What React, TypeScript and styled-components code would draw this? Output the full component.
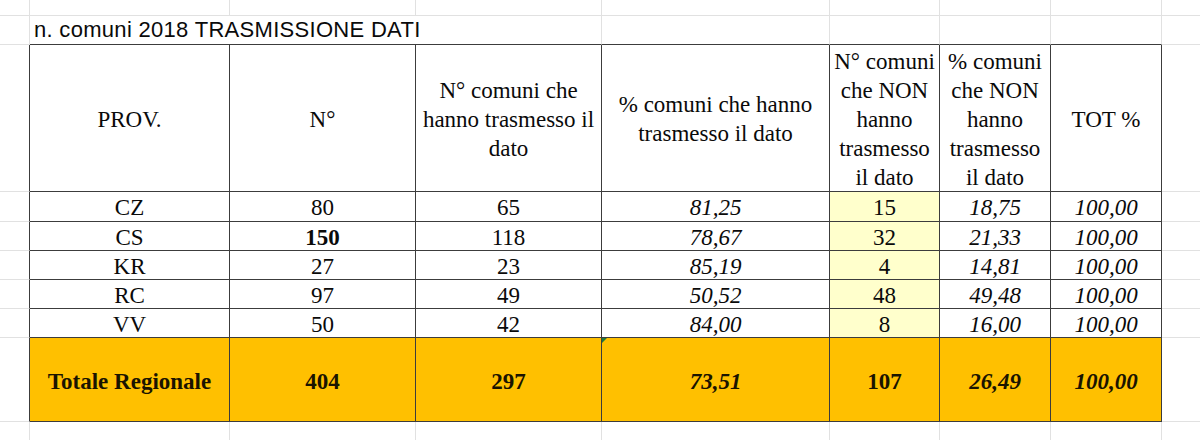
import styled, { createGlobalStyle } from "styled-components";
import { Fragment } from "react";

const GlobalStyle = createGlobalStyle`
	html, body {
		margin: 0;
		padding: 0;
		background: #ffffff;
	}
	* {
		box-sizing: border-box;
	}
`;

type Line = "light" | "dark" | "none";

const lineColor = (l: Line) =>
	l === "dark" ? "1px solid #3c3c3c" : l === "light" ? "1px solid #e1e1e1" : "none";

type Row = {
	prov: string;
	n: string;
	bold?: boolean;
	sent: string;
	pct: string;
	notSent: string;
	pctNot: string;
	tot: string;
};

const rows: Row[] = [
	{ prov: "CZ", n: "80", sent: "65", pct: "81,25", notSent: "15", pctNot: "18,75", tot: "100,00" },
	{ prov: "CS", n: "150", bold: true, sent: "118", pct: "78,67", notSent: "32", pctNot: "21,33", tot: "100,00" },
	{ prov: "KR", n: "27", sent: "23", pct: "85,19", notSent: "4", pctNot: "14,81", tot: "100,00" },
	{ prov: "RC", n: "97", sent: "49", pct: "50,52", notSent: "48", pctNot: "49,48", tot: "100,00" },
	{ prov: "VV", n: "50", sent: "42", pct: "84,00", notSent: "8", pctNot: "16,00", tot: "100,00" },
];

function App() {
	return (
		<>
			<GlobalStyle />
			<Sheet>
				{/* top empty row */}
				{Array.from({ length: 8 }).map((_, i) => (
					<Blank key={"a" + i} />
				))}
				<Blank $right="none" />

				{/* title row */}
				<Blank />
				<Title>n. comuni 2018 TRASMISSIONE DATI</Title>
				<Blank $bottom="dark" />
				<Blank $bottom="dark" />
				<Blank $bottom="dark" />
				<Blank $bottom="dark" />
				<Blank $right="none" />

				{/* header */}
				<Blank $right="dark" $bottom="light" />
				<HeadCell>PROV.</HeadCell>
				<HeadCell>N°</HeadCell>
				<HeadCell>
					N° comuni che
					<br />
					hanno trasmesso il
					<br />
					dato
				</HeadCell>
				<HeadCell>
					% comuni che hanno
					<br />
					trasmesso il dato
				</HeadCell>
				<HeadCell>
					N° comuni
					<br />
					che NON
					<br />
					hanno
					<br />
					trasmesso
					<br />
					il dato
				</HeadCell>
				<HeadCell>
					% comuni
					<br />
					che NON
					<br />
					hanno
					<br />
					trasmesso
					<br />
					il dato
				</HeadCell>
				<HeadCell>TOT %</HeadCell>
				<Blank $right="none" />

				{rows.map((r) => (
					<Fragment key={r.prov}>
						<Blank $right="dark" />
						<DataCell>{r.prov}</DataCell>
						<DataCell $bold={r.bold}>{r.n}</DataCell>
						<DataCell>{r.sent}</DataCell>
						<DataCell $italic>{r.pct}</DataCell>
						<DataCell $fill="#ffffcc">{r.notSent}</DataCell>
						<DataCell $italic>{r.pctNot}</DataCell>
						<DataCell $italic>{r.tot}</DataCell>
						<Blank $right="none" />
					</Fragment>
				))}

				{/* totals */}
				<Blank $right="dark" />
				<TotalCell>Totale Regionale</TotalCell>
				<TotalCell>404</TotalCell>
				<TotalCell>297</TotalCell>
				<TotalCell $italic>
					<ErrorMark />
					73,51
				</TotalCell>
				<TotalCell>107</TotalCell>
				<TotalCell $italic>26,49</TotalCell>
				<TotalCell $italic>100,00</TotalCell>
				<Blank $right="none" />

				{/* bottom empty row */}
				{Array.from({ length: 8 }).map((_, i) => (
					<Blank key={"z" + i} $bottom="none" />
				))}
				<Blank $right="none" $bottom="none" />
			</Sheet>
		</>
	);
}

export default App;

const Sheet = styled.div`
	width: 1200px;
	height: 440px;
	display: grid;
	grid-template-columns: 30px 200px 186px 186px 228px 110px 111px 111px 1fr;
	grid-template-rows: 16px 29px 147px 30px 29px 29px 29px 29px 84px 1fr;
	background: #ffffff;
	overflow: hidden;
`;

const Blank = styled.div<{ $right?: Line; $bottom?: Line }>`
	border-right: ${(p) => lineColor(p.$right ?? "light")};
	border-bottom: ${(p) => lineColor(p.$bottom ?? "light")};
`;

const Title = styled.div`
	grid-column: span 3;
	border-right: 1px solid #e1e1e1;
	border-bottom: 1px solid #3c3c3c;
	padding-left: 4px;
	display: flex;
	align-items: flex-end;
	padding-bottom: 1px;
	font-family: "Liberation Sans", Arial, sans-serif;
	font-size: 22px;
	letter-spacing: 0.3px;
	color: #0a0a0a;
	white-space: nowrap;
`;

const TableCell = styled.div`
	position: relative;
	border-right: 1px solid #3c3c3c;
	border-bottom: 1px solid #3c3c3c;
	display: flex;
	align-items: center;
	justify-content: center;
	text-align: center;
	font-family: "Liberation Serif", "Times New Roman", serif;
	font-size: 23px;
	color: #0a0a0a;
	white-space: nowrap;
`;

const HeadCell = styled(TableCell)`
	line-height: 29px;
	padding-top: 2px;
`;

const DataCell = styled(TableCell)<{ $italic?: boolean; $bold?: boolean; $fill?: string }>`
	padding-top: 3px;
	line-height: 26px;
	background: ${(p) => p.$fill ?? "#ffffff"};
	font-style: ${(p) => (p.$italic ? "italic" : "normal")};
	font-weight: ${(p) => (p.$bold ? "bold" : "normal")};
`;

const TotalCell = styled(TableCell)<{ $italic?: boolean }>`
	background: #ffc000;
	color: #1a1400;
	font-weight: bold;
	padding-top: 4px;
	font-style: ${(p) => (p.$italic ? "italic" : "normal")};
`;

const ErrorMark = styled.span`
	position: absolute;
	top: 0;
	left: 0;
	width: 0;
	height: 0;
	border-top: 5px solid #1f7a3a;
	border-right: 5px solid transparent;
`;
